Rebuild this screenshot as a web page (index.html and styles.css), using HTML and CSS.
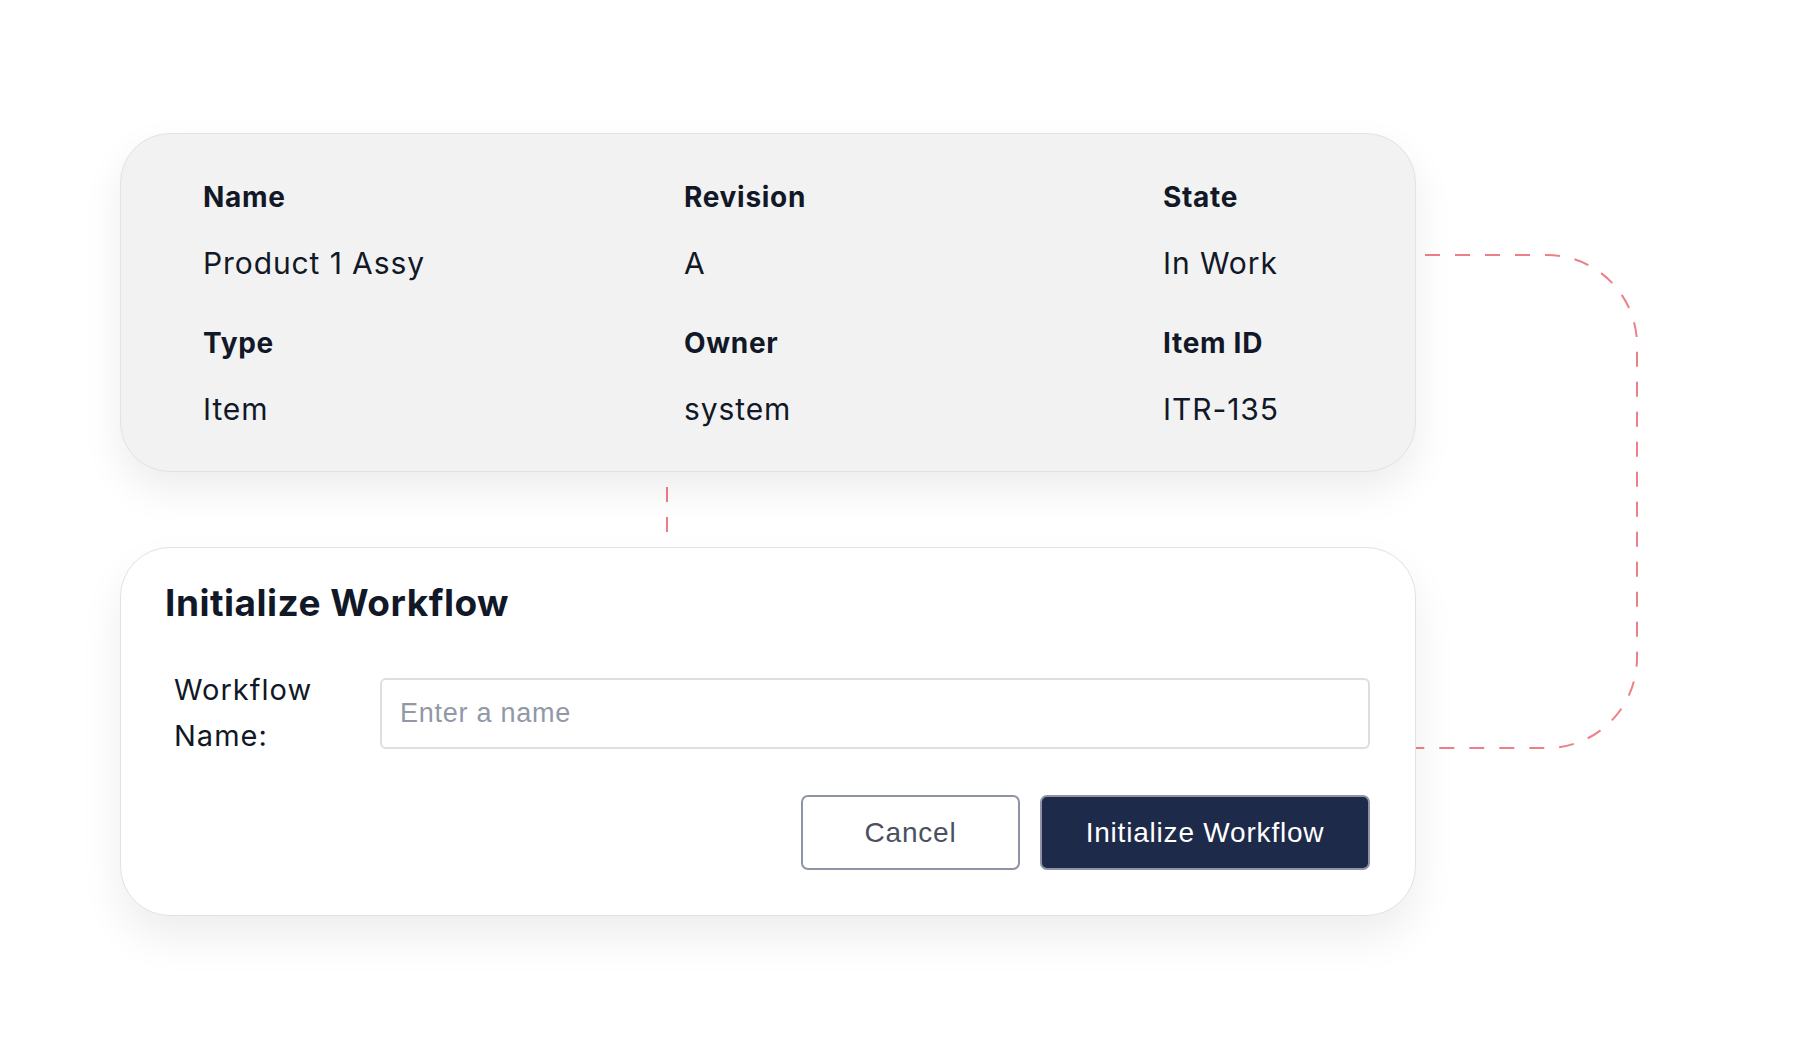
FILE: index.html
```html
<!DOCTYPE html>
<html lang="en">
<head>
    <meta charset="UTF-8">
    <meta name="viewport" content="width=device-width, initial-scale=1.0">
    <title>Initialize Workflow</title>
    <link rel="stylesheet" href="styles.css">
</head>
<body>
    <div class="stage">
        <!-- dashed connectors between the item card and the dialog -->
        <svg class="links" width="1800" height="1048" viewBox="0 0 1800 1048">
            <path d="M667 487 V535" />
            <path d="M1425 255 H1547 A90 90 0 0 1 1637 345 V658 A90 90 0 0 1 1547 748 H1410" />
        </svg>

        <div class="card item">
            <div class="props">
                <div class="prop">
                    <div class="label">Name</div>
                    <div class="value">Product 1 Assy</div>
                </div>
                <div class="prop">
                    <div class="label">Revision</div>
                    <div class="value">A</div>
                </div>
                <div class="prop">
                    <div class="label">State</div>
                    <div class="value">In Work</div>
                </div>
                <div class="prop">
                    <div class="label">Type</div>
                    <div class="value">Item</div>
                </div>
                <div class="prop">
                    <div class="label">Owner</div>
                    <div class="value">system</div>
                </div>
                <div class="prop">
                    <div class="label">Item ID</div>
                    <div class="value">ITR-135</div>
                </div>
            </div>
        </div>

        <div class="card dialog">
            <h2>Initialize Workflow</h2>
            <div class="field">
                <label for="wf-name">Workflow Name:</label>
                <input id="wf-name" type="text" placeholder="Enter a name">
            </div>
            <div class="actions">
                <button class="btn cancel">Cancel</button>
                <button class="btn primary">Initialize Workflow</button>
            </div>
        </div>
    </div>
</body>
</html>
```

FILE: styles.css
```css
body {
    margin: 0;
    background: #fff;
    font-family: Inter, "Noto Sans", sans-serif;
    color: #111827;
}
.stage {
    position: relative;
    width: 1800px;
    height: 1048px;
    box-sizing: border-box;
    padding: 133px 0 0 120px;
    display: flex;
    flex-direction: column;
    gap: 75px;
}
.links {
    position: absolute;
    left: 0;
    top: 0;
    z-index: 1;
}
.links path {
    fill: none;
    stroke: #ec7f88;
    stroke-width: 2;
    stroke-dasharray: 15 15;
}
.card {
    position: relative;
    z-index: 2;
    width: 1296px;
    box-sizing: border-box;
    border: 1px solid #e2e2e2;
    border-radius: 50px;
}
.item {
    height: 339px;
    background: #f2f2f2;
    padding: 46px 0 0 82px;
    box-shadow: 0 18px 40px rgba(0, 0, 0, 0.075);
}
.props {
    display: grid;
    grid-template-columns: 481px 479px auto;
    row-gap: 45px;
}
.label {
    font-size: 28px;
    line-height: 34px;
    font-weight: 700;
    letter-spacing: 0.7px;
}
.value {
    margin-top: 31px;
    font-size: 30px;
    line-height: 36px;
    letter-spacing: 0.9px;
}
.dialog {
    height: 369px;
    background: #fff;
    padding: 33px 45px 0 44px;
    box-shadow: 0 22px 44px rgba(0, 0, 0, 0.07);
}
.dialog h2 {
    margin: 0;
    font-size: 37px;
    line-height: 44px;
    font-weight: 700;
    letter-spacing: 0.5px;
}
.field {
    display: flex;
    align-items: center;
    margin-top: 42px;
    padding-left: 9px;
}
.field label {
    width: 206px;
    font-size: 29px;
    line-height: 46px;
    letter-spacing: 1px;
}
.field input {
    flex: 1;
    height: 71px;
    box-sizing: border-box;
    border: 2px solid #dedede;
    border-radius: 6px;
    padding: 0 18px;
    font-family: "Liberation Sans", Arial, sans-serif;
    font-size: 27px;
    letter-spacing: 0.75px;
    color: #111827;
    outline: none;
}
.field input::placeholder {
    color: #9198a6;
}
.actions {
    display: flex;
    justify-content: flex-end;
    gap: 20px;
    margin-top: 36px;
}
.btn {
    height: 75px;
    box-sizing: border-box;
    border: 2px solid #8e94a3;
    border-radius: 7px;
    font-family: "Liberation Sans", Arial, sans-serif;
    font-size: 28px;
    letter-spacing: 0.8px;
    cursor: pointer;
}
.cancel {
    width: 219px;
    background: #fff;
    color: #4b5060;
}
.primary {
    width: 330px;
    background: #1e2a4a;
    color: #fff;
}
```
